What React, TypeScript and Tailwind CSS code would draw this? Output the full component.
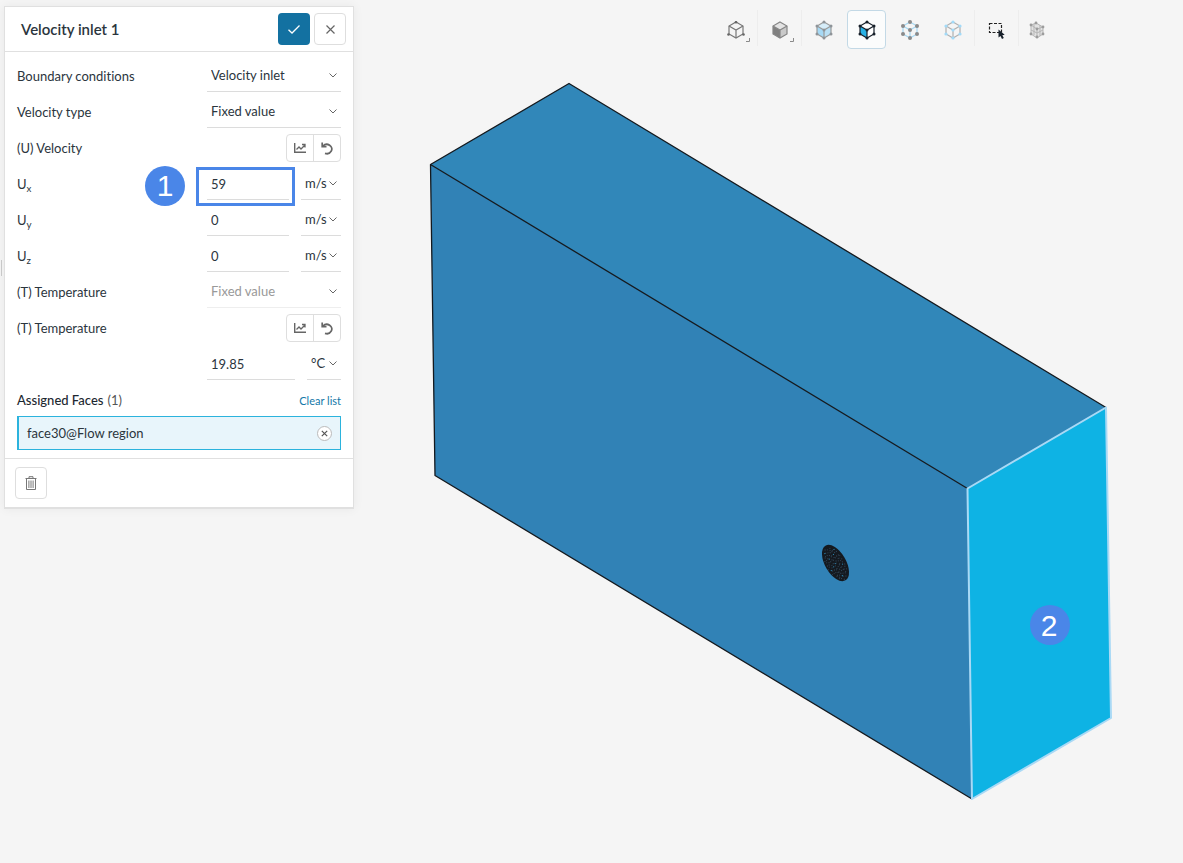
import React, { useState } from "react";

const cubeOutline = "M9 1 16 5v8l-7 4-7-4V5z";
const cubeInner = "M2 5l7 4 7-4M9 9v8";
const cubeDots = [
  [9, 1],
  [16, 5],
  [16, 13],
  [9, 17],
  [2, 13],
  [2, 5],
  [9, 9],
];

const meshDots = Array.from({ length: 90 }, (_, i) => {
  const angle = i * 2.4;
  const radius = Math.sqrt(i / 90);
  return {
    x: Math.round(Math.cos(angle) * radius * 18),
    y: Math.round(Math.sin(angle) * radius * 9),
    bright: i % 11 === 0,
  };
});

type CubeProps = {
  stroke: string;
  left?: string;
  right?: string;
  top?: string;
  dots?: string;
  dotSize?: number;
};

function Cube({ stroke, left = "none", right = "none", top = "none", dots, dotSize = 1.5 }: CubeProps) {
  return (
    <svg viewBox="0 0 18 18" className="h-[18px] w-[18px] overflow-visible" aria-hidden="true">
      <path d="M2 5l7 4v8l-7-4z" fill={left} />
      <path d="M16 5l-7 4v8l7-4z" fill={right} />
      <path d="M9 1l7 4-7 4-7-4z" fill={top} />
      <path d={cubeOutline} fill="none" stroke={stroke} strokeWidth="1.2" />
      <path d={cubeInner} fill="none" stroke={stroke} strokeWidth="1.2" />
      {dots && cubeDots.map(([x, y]) => <circle key={`${x}-${y}`} cx={x} cy={y} r={dotSize} fill={dots} />)}
    </svg>
  );
}

function Corner() {
  return (
    <svg viewBox="0 0 4 4" className="absolute bottom-1.5 right-1 h-1 w-1" aria-hidden="true">
      <path d="M3.5 0v3.5H0" fill="none" stroke="#8a8a8a" />
    </svg>
  );
}

function Chevron() {
  return (
    <svg viewBox="0 0 8 5" className="pointer-events-none absolute right-1 top-[17px] h-[5px] w-2" aria-hidden="true">
      <path d="M.5.5 4 4 7.5.5" fill="none" stroke="#666" />
    </svg>
  );
}

function Separator() {
  return <span className="mx-0.5 h-9 w-px bg-[#ededed]" />;
}

function ToolButton({ label, active, last, children }: { label: string; active?: boolean; last?: boolean; children: React.ReactNode }) {
  return (
    <button
      type="button"
      aria-label={label}
      aria-pressed={!!active}
      className={`relative flex h-[39px] items-center justify-center rounded border ${last ? "w-8" : "w-[39px]"} ${
        active ? "border-[#c3d9e6] bg-[#fbfcfc]" : "border-transparent hover:bg-white"
      }`}
    >
      {children}
    </button>
  );
}

function Toolbar() {
  return (
    <div className="flex justify-end pr-[130px] pt-2.5" role="toolbar" aria-label="View">
      <ToolButton label="Wireframe">
        <Cube stroke="#777" />
        <svg viewBox="0 0 18 18" className="absolute h-[18px] w-[18px]" aria-hidden="true">
          {[[9, 1.2], [1.5, 13.5], [16.5, 13.5]].map(([x, y]) => (
            <circle key={x} cx={x} cy={y} r="1.3" fill="#666" />
          ))}
        </svg>
        <Corner />
      </ToolButton>
      <Separator />
      <ToolButton label="Shaded">
        <Cube stroke="#858585" left="#808080" right="#c9c9c9" top="#e3e3e3" />
        <Corner />
      </ToolButton>
      <Separator />
      <div className="flex gap-1">
        <ToolButton label="Select volumes">
          <Cube stroke="#9a9a9a" left="#a6d9f5" right="#b9e0f5" top="#d6edf9" dots="#8e9499" />
        </ToolButton>
        <ToolButton label="Select faces" active>
          <Cube stroke="#17202a" left="#29b2e6" right="#fff" top="#fff" dots="#17202a" />
        </ToolButton>
        <ToolButton label="Select edges">
          <Cube stroke="#a5d8f3" dots="#8a8a8a" dotSize={2} />
        </ToolButton>
        <ToolButton label="Select vertices">
          <Cube stroke="#b0b0b0" dots="#a2daf8" dotSize={1.6} />
        </ToolButton>
      </div>
      <Separator />
      <ToolButton label="Box select">
        <svg viewBox="0 0 18 18" className="h-[18px] w-[18px]" aria-hidden="true">
          <path d="M1.5 2.5h12v9h-12z" fill="none" stroke="#222" strokeWidth="1.2" strokeDasharray="3 1.5" />
          <path d="M10.5 8.5v8l2-1.5 1.5 3 1.8-.9-1.5-2.8 2.4-.6z" fill="#17202a" />
        </svg>
      </ToolButton>
      <Separator />
      <ToolButton label="Mesh" last>
        <svg viewBox="0 0 18 18" className="h-[18px] w-[18px]" aria-hidden="true">
          <path d="M3 4l5-2 7 4v7l-6 4-6-4z" fill="#e2e2e2" />
          <path d="M3 4l5-2 7 4v7l-6 4-6-4zM3 4l6 4 6-2M9 8v9M6 3v11M12 4v11M3 9l6 3 6-3" fill="none" stroke="#b5b5b5" />
          {[[3, 4], [8, 2], [15, 6], [15, 13], [9, 16], [3, 13], [9, 8]].map(([x, y]) => (
            <circle key={`${x}-${y}`} cx={x} cy={y} r="1.4" fill="#9c9c9c" />
          ))}
        </svg>
      </ToolButton>
    </div>
  );
}

function Scene() {
  return (
    <svg viewBox="354 49 829 814" className="block h-auto w-full" role="img" aria-label="Flow region model">
      <path d="M569 83.5 1106 407.5 967.5 488.5 430.5 164.5z" fill="#3187b9" />
      <path d="M430.5 164.5 967.5 488.5 972 799 435 475.5z" fill="#3182b6" />
      <path d="M967.5 488.5 1106 407.5 1111 718 972 799z" fill="#0eb3e4" />
      <path
        d="M967.5 488.5 430.5 164.5 569 83.5 1106 407.5M430.5 164.5 435 475.5 972 799"
        fill="none"
        stroke="#14191e"
        strokeWidth="1.3"
        strokeLinejoin="round"
      />
      <path
        d="M967.5 488.5 1106 407.5 1111 718 972 799z"
        fill="none"
        stroke="#a9d9f5"
        strokeWidth="2"
        strokeLinejoin="round"
      />
      <g transform="translate(835.5 563) rotate(60)">
        <ellipse rx="20" ry="10.5" fill="#14191f" />
        {meshDots.map((dot, i) => (
          <rect key={i} x={dot.x} y={dot.y} width="1" height="1" fill={dot.bright ? "#2f9fd6" : "#33485a"} />
        ))}
      </g>
      <circle cx="1050" cy="625" r="20" fill="#4a86e8" />
      <text x="1049" y="636" textAnchor="middle" fontSize="30" fill="#fff" fontFamily="Liberation Sans, Arial, sans-serif">
        2
      </text>
    </svg>
  );
}

function Row({ label, htmlFor, children }: { label?: React.ReactNode; htmlFor?: string; children: React.ReactNode }) {
  return (
    <div className="flex h-9 items-center justify-between">
      <label htmlFor={htmlFor} className="pt-1.5">
        {label}
      </label>
      <div className="relative flex h-9 w-[134px] justify-between">{children}</div>
    </div>
  );
}

function Dropdown({ id, label, options, disabled, className = "w-full" }: { id: string; label?: string; options: string[]; disabled?: boolean; className?: string }) {
  return (
    <div className={`relative h-9 border-b ${disabled ? "border-[#eeeeee]" : "border-[#dcdcdc]"} ${className}`}>
      <select
        id={id}
        aria-label={label}
        disabled={disabled}
        className="h-full w-full appearance-none bg-transparent pl-1 pt-1 outline-none disabled:text-[#999] disabled:opacity-100"
      >
        {options.map((option) => (
          <option key={option}>{option}</option>
        ))}
      </select>
      <Chevron />
    </div>
  );
}

function NumberField({ id, label, initial, className = "w-[82px]" }: { id: string; label?: string; initial: string; className?: string }) {
  const [value, setValue] = useState(initial);

  return (
    <input
      id={id}
      aria-label={label}
      value={value}
      onChange={(e) => setValue(e.target.value)}
      className={`h-9 border-b border-[#dcdcdc] bg-transparent pl-1 pt-1 outline-none ${className}`}
    />
  );
}

function ChartResetButtons() {
  return (
    <div className="ml-auto mt-1.5 flex h-7 w-[55px] divide-x divide-[#dedede] rounded border border-[#dedede]">
      <button type="button" aria-label="Open table" className="flex flex-1 items-center justify-center">
        <svg viewBox="0 0 12 10" className="h-2.5 w-3" fill="none" stroke="#666" aria-hidden="true">
          <path d="M.7 0v9.3H12" strokeWidth="1.4" />
          <path d="M2.5 6.5 5 4l2 2L10.500 2.500M8 1.5h3v3" strokeWidth="1.3" />
        </svg>
      </button>
      <button type="button" aria-label="Reset" className="flex flex-1 items-center justify-center">
        <svg viewBox="0 0 13 13" className="h-[13px] w-[13px]" fill="none" stroke="#666" aria-hidden="true">
          <path d="M2 4A5 4.600 0 1 1 4 11.300" strokeWidth="1.8" />
          <path d="M1.2.5v4.200h4.300" strokeWidth="1.7" />
        </svg>
      </button>
    </div>
  );
}

export default function App() {
  const [faces, setFaces] = useState(["face30@Flow region"]);

  return (
    <div className="relative flex min-h-screen items-start bg-[#f5f5f5] font-['Lato','Liberation_Sans',sans-serif] text-[13px] text-[#2b353d] [font-variant-ligatures:none]">
      <span className="absolute left-0 top-[260px] h-4 w-0.5 border-r border-[#c8c8c8]" />

      <aside className="ml-1 mt-1.5 w-[350px] shrink-0 border border-b-2 border-[#e0e0e0] bg-white shadow-[0_0_10px_rgba(0,0,0,0.06)]">
        <header className="flex h-[45px] items-center gap-1 border-b border-[#e0e0e0] pl-4 pr-[7px]">
          <h1 className="flex-1 text-[15px] font-semibold">Velocity inlet 1</h1>
          <button type="button" aria-label="Apply" className="flex h-8 w-8 items-center justify-center rounded bg-[#1371a1]">
            <svg viewBox="0 0 12 9" className="h-[9px] w-3" fill="none" stroke="#fff" strokeWidth="1.3" aria-hidden="true">
              <path d="M.5 4.8 4 8 11.5.5" />
            </svg>
          </button>
          <button type="button" aria-label="Close" className="flex h-8 w-8 items-center justify-center rounded border border-[#dedede]">
            <svg viewBox="0 0 9 9" className="h-[9px] w-[9px]" fill="none" stroke="#666" strokeWidth="1.2" aria-hidden="true">
              <path d="M.5.5l8 8M8.5.5l-8 8" />
            </svg>
          </button>
        </header>

        <form className="px-3 pb-2 pt-1" onSubmit={(e) => e.preventDefault()}>
          <Row label="Boundary conditions" htmlFor="condition">
            <Dropdown id="condition" options={["Velocity inlet", "Velocity outlet", "Pressure inlet"]} />
          </Row>
          <Row label="Velocity type" htmlFor="velocity-type">
            <Dropdown id="velocity-type" options={["Fixed value", "Flow rate"]} />
          </Row>
          <Row label="(U) Velocity">
            <ChartResetButtons />
          </Row>
          <Row label={<>U<sub>x</sub></>} htmlFor="ux">
            <NumberField id="ux" initial="59" />
            <Dropdown id="ux-unit" label="Ux unit" options={["m/s", "ft/s"]} className="w-10" />
            <span className="pointer-events-none absolute -left-[11px] top-[3px] h-[39px] w-[99px] border-[3px] border-[#4a86e8]" />
            <span className="absolute -left-[62px] top-0.5 flex h-10 w-10 items-center justify-center rounded-full bg-[#4a86e8] font-['Liberation_Sans',Arial,sans-serif] text-3xl text-white">
              1
            </span>
          </Row>
          <Row label={<>U<sub>y</sub></>} htmlFor="uy">
            <NumberField id="uy" initial="0" />
            <Dropdown id="uy-unit" label="Uy unit" options={["m/s", "ft/s"]} className="w-10" />
          </Row>
          <Row label={<>U<sub>z</sub></>} htmlFor="uz">
            <NumberField id="uz" initial="0" />
            <Dropdown id="uz-unit" label="Uz unit" options={["m/s", "ft/s"]} className="w-10" />
          </Row>
          <Row label="(T) Temperature" htmlFor="temperature-type">
            <Dropdown id="temperature-type" options={["Fixed value"]} disabled />
          </Row>
          <Row label="(T) Temperature" htmlFor="temperature">
            <ChartResetButtons />
          </Row>
          <Row>
            <NumberField id="temperature" label="Temperature" initial="19.85" className="w-[88px]" />
            <Dropdown id="temperature-unit" label="Temperature unit" options={["°C", "K", "°F"]} className="w-[34px]" />
          </Row>

          <div className="flex h-9 items-center justify-between pt-1.5">
            <h2 className="flex gap-1">
              <span className="font-medium text-[#1c2730]">Assigned Faces</span>
              <span className="text-[#555]">({faces.length})</span>
            </h2>
            <button type="button" onClick={() => setFaces([])} className="text-[11px] text-[#1378a8]">
              Clear list
            </button>
          </div>
          <ul>
            {faces.map((face) => (
              <li key={face} className="flex h-[34px] items-center justify-between border border-l-2 border-[#2bb3dd] bg-[#e8f5fb] px-2">
                <span className="pt-0.5">{face}</span>
                <button
                  type="button"
                  aria-label={`Remove ${face}`}
                  onClick={() => setFaces(faces.filter((f) => f !== face))}
                  className="flex h-[15px] w-[15px] items-center justify-center rounded-full border border-[#bbb] bg-white"
                >
                  <svg viewBox="0 0 7 7" className="h-[7px] w-[7px]" stroke="#555" strokeWidth="1.2" aria-hidden="true">
                    <path d="M.8.8l5.4 5.4M6.2.8.8 6.2" />
                  </svg>
                </button>
              </li>
            ))}
          </ul>
        </form>

        <footer className="border-t border-[#e0e0e0] px-2.5 py-2">
          <button type="button" aria-label="Delete" className="flex h-8 w-8 items-center justify-center rounded border border-[#dedede]">
            <svg viewBox="0 0 12 14" className="h-3.5 w-3" fill="none" stroke="#777" aria-hidden="true">
              <path d="M.5 2.5h11M4 2V.7h4V2M1.5 2.5v11h9v-11M3.9 4.5v7.5M6 4.5v7.5M8.1 4.5v7.5" />
            </svg>
          </button>
        </footer>
      </aside>

      <main className="min-w-0 flex-1">
        <Toolbar />
        <Scene />
      </main>
    </div>
  );
}
